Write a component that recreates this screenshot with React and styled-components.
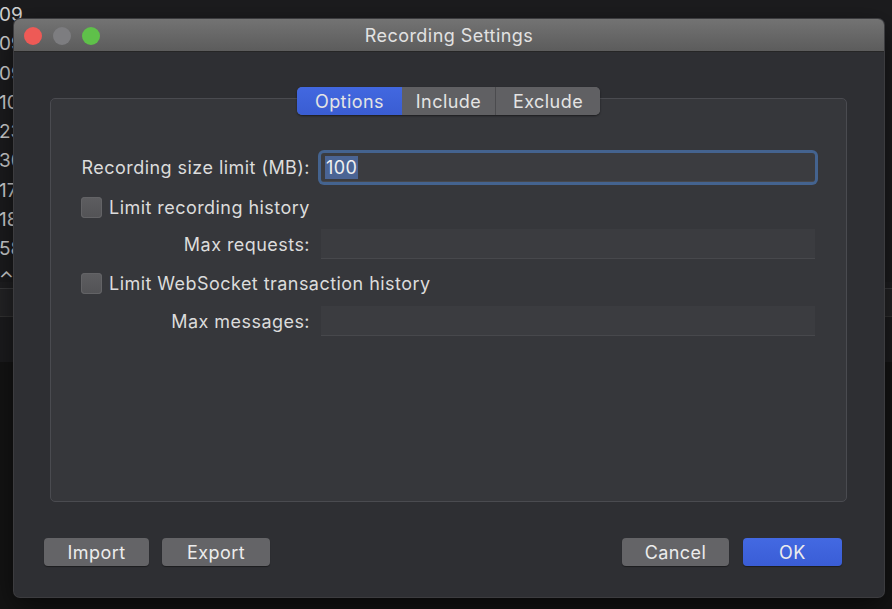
import React from "react";
import styled, { createGlobalStyle } from "styled-components";

const GlobalStyle = createGlobalStyle`
  html, body {
    margin: 0;
    padding: 0;
    background: #151515;
    font-family: "Inter", "Liberation Sans", sans-serif;
  }
`;

const Desktop = styled.div`
  position: relative;
  width: 892px;
  height: 609px;
  overflow: hidden;
  background: #151515;
`;

const BehindApp = styled.div`
  display: flex;
  flex-direction: column;
  height: 100%;
`;

const TimeColumn = styled.div`
  display: flex;
  flex-direction: column;
  height: 282px;
  background: #1c1c1e;
  color: #d4d4d4;
  font-size: 19px;
  line-height: 29.3px;
`;

const TimeCell = styled.div`
  height: 29.3px;
  margin-left: -1px;
`;

const Band = styled.div`
  height: ${(p) => p.h}px;
  background: ${(p) => p.bg};
  border-bottom: 1px solid ${(p) => p.line || "transparent"};
`;

const Window = styled.div`
  position: absolute;
  left: 14px;
  top: 19px;
  width: 870px;
  height: 578px;
  display: flex;
  flex-direction: column;
  border-radius: 6px;
  overflow: hidden;
  background: #2e2f33;
  letter-spacing: 0.45px;
  box-shadow: 0 0 0 1px #3c3c3f, 0 10px 30px rgba(0, 0, 0, 0.6);
`;

const TitleBar = styled.div`
  position: relative;
  height: 32px;
  flex: none;
  display: flex;
  align-items: center;
  justify-content: center;
  background: linear-gradient(#737373, #5c5c5c);
  border-bottom: 1px solid #262626;
  color: #e2e2e2;
  font-size: 18px;
`;

const Lights = styled.div`
  position: absolute;
  left: 10px;
  top: 8px;
  display: flex;
  gap: 11px;
`;

const Light = styled.span`
  width: 18px;
  height: 18px;
  border-radius: 50%;
  background: ${(p) => p.color};
`;

const Body = styled.div`
  flex: 1;
  display: flex;
  flex-direction: column;
  padding: 35px 37px 31px 36px;
`;

const TabsRow = styled.div`
  position: relative;
  z-index: 1;
  display: flex;
  justify-content: center;
  margin-bottom: -17px;
`;

const Segmented = styled.div`
  display: flex;
  height: 28px;
  border-radius: 5px;
  overflow: hidden;
  background: #606063;
  box-shadow: 0 1px 2px rgba(0, 0, 0, 0.5);
`;

const Tab = styled.div`
  width: ${(p) => p.w}px;
  display: flex;
  align-items: center;
  justify-content: center;
  font-size: 18px;
  color: #e4e4e4;
  background: ${(p) => (p.active ? "linear-gradient(#4268e0, #3a5dd2)" : "#606063")};
  border-left: ${(p) => (p.divider ? "1px solid #4b4b4e" : "none")};
`;

const Group = styled.div`
  flex: 1;
  border: 1px solid #4a4b50;
  border-radius: 5px;
  background: #36373b;
  padding: 52px 31px 0 30px;
`;

const Row = styled.div`
  display: grid;
  grid-template-columns: 229px 1fr;
  column-gap: 11px;
  align-items: center;
  height: ${(p) => p.h}px;
  margin-top: ${(p) => p.top || 0}px;
`;

const Label = styled.label`
  text-align: right;
  font-size: 18px;
  color: #dcdcdc;
  white-space: nowrap;
`;

const Field = styled.div`
  height: ${(p) => p.h}px;
  display: flex;
  align-items: center;
  padding-left: 4px;
  background: #3b3c40;
  border-bottom: 1px solid #47484c;
  box-shadow: ${(p) => (p.focused ? "0 0 0 3px #44638f" : "none")};
  border-radius: ${(p) => (p.focused ? "3px" : "0")};
  font-size: 18px;
  color: #f0f0f0;
`;

const Selected = styled.span`
  background: #4a6494;
  padding: 1px 1px;
`;

const CheckRow = styled.div`
  display: flex;
  align-items: center;
  gap: 7px;
  height: ${(p) => p.h}px;
  margin-top: ${(p) => p.top || 0}px;
  font-size: 18px;
  color: #dcdcdc;
`;

const Box = styled.span`
  width: 21px;
  height: 21px;
  border-radius: 4px;
  background: linear-gradient(#5d5d60, #535356);
  box-shadow: inset 0 0 0 1px #636366;
`;

const Footer = styled.div`
  display: flex;
  align-items: center;
  margin-top: 36px;
  margin-left: -6px;
  margin-right: 5px;
`;

const ButtonGroup = styled.div`
  display: flex;
  gap: ${(p) => p.gap}px;
  margin-left: ${(p) => (p.right ? "auto" : "0")};
`;

const Button = styled.button`
  width: ${(p) => p.w}px;
  height: 28px;
  border: none;
  border-radius: 4px;
  font-family: inherit;
  letter-spacing: inherit;
  font-size: 18px;
  color: #ececec;
  background: ${(p) => (p.primary ? "linear-gradient(#4369e2, #3a5dd6)" : "#646467")};
  box-shadow: 0 1px 1px rgba(0, 0, 0, 0.4);
  padding: 0;
`;

const times = ["09", "09", "09", "10", "23", "30", "17", "18", "58", "⌃"];

export default function App() {
  return (
    <Desktop>
      <GlobalStyle />
      <BehindApp>
        <TimeColumn>
          {times.map((t, i) => (
            <TimeCell key={i}>{t}</TimeCell>
          ))}
        </TimeColumn>
        <Band h={6} bg="#1f1f21" line="#3a3a3c" />
        <Band h={27} bg="#242426" line="#333" />
        <Band h={45} bg="#1c1c1e" />
        <Band h={250} bg="#141414" />
      </BehindApp>

      <Window>
        <TitleBar>
          <Lights>
            <Light color="#ee5a56" />
            <Light color="#7d7d80" />
            <Light color="#5fc04a" />
          </Lights>
          Recording Settings
        </TitleBar>
        <Body>
          <TabsRow>
            <Segmented>
              <Tab w={105} active>Options</Tab>
              <Tab w={93}>Include</Tab>
              <Tab w={104} divider>Exclude</Tab>
            </Segmented>
          </TabsRow>
          <Group>
            <Row h={28} top={2}>
              <Label>Recording size limit (MB):</Label>
              <Field h={28} focused>
                <Selected>100</Selected>
              </Field>
            </Row>
            <CheckRow h={22} top={15}>
              <Box />
              Limit recording history
            </CheckRow>
            <Row h={29} top={11}>
              <Label>Max requests:</Label>
              <Field h={29} />
            </Row>
            <CheckRow h={22} top={14}>
              <Box />
              Limit WebSocket transaction history
            </CheckRow>
            <Row h={29} top={12}>
              <Label>Max messages:</Label>
              <Field h={29} />
            </Row>
          </Group>
          <Footer>
            <ButtonGroup gap={13}>
              <Button w={105}>Import</Button>
              <Button w={108}>Export</Button>
            </ButtonGroup>
            <ButtonGroup gap={14} right>
              <Button w={107}>Cancel</Button>
              <Button w={99} primary>OK</Button>
            </ButtonGroup>
          </Footer>
        </Body>
      </Window>
    </Desktop>
  );
}
